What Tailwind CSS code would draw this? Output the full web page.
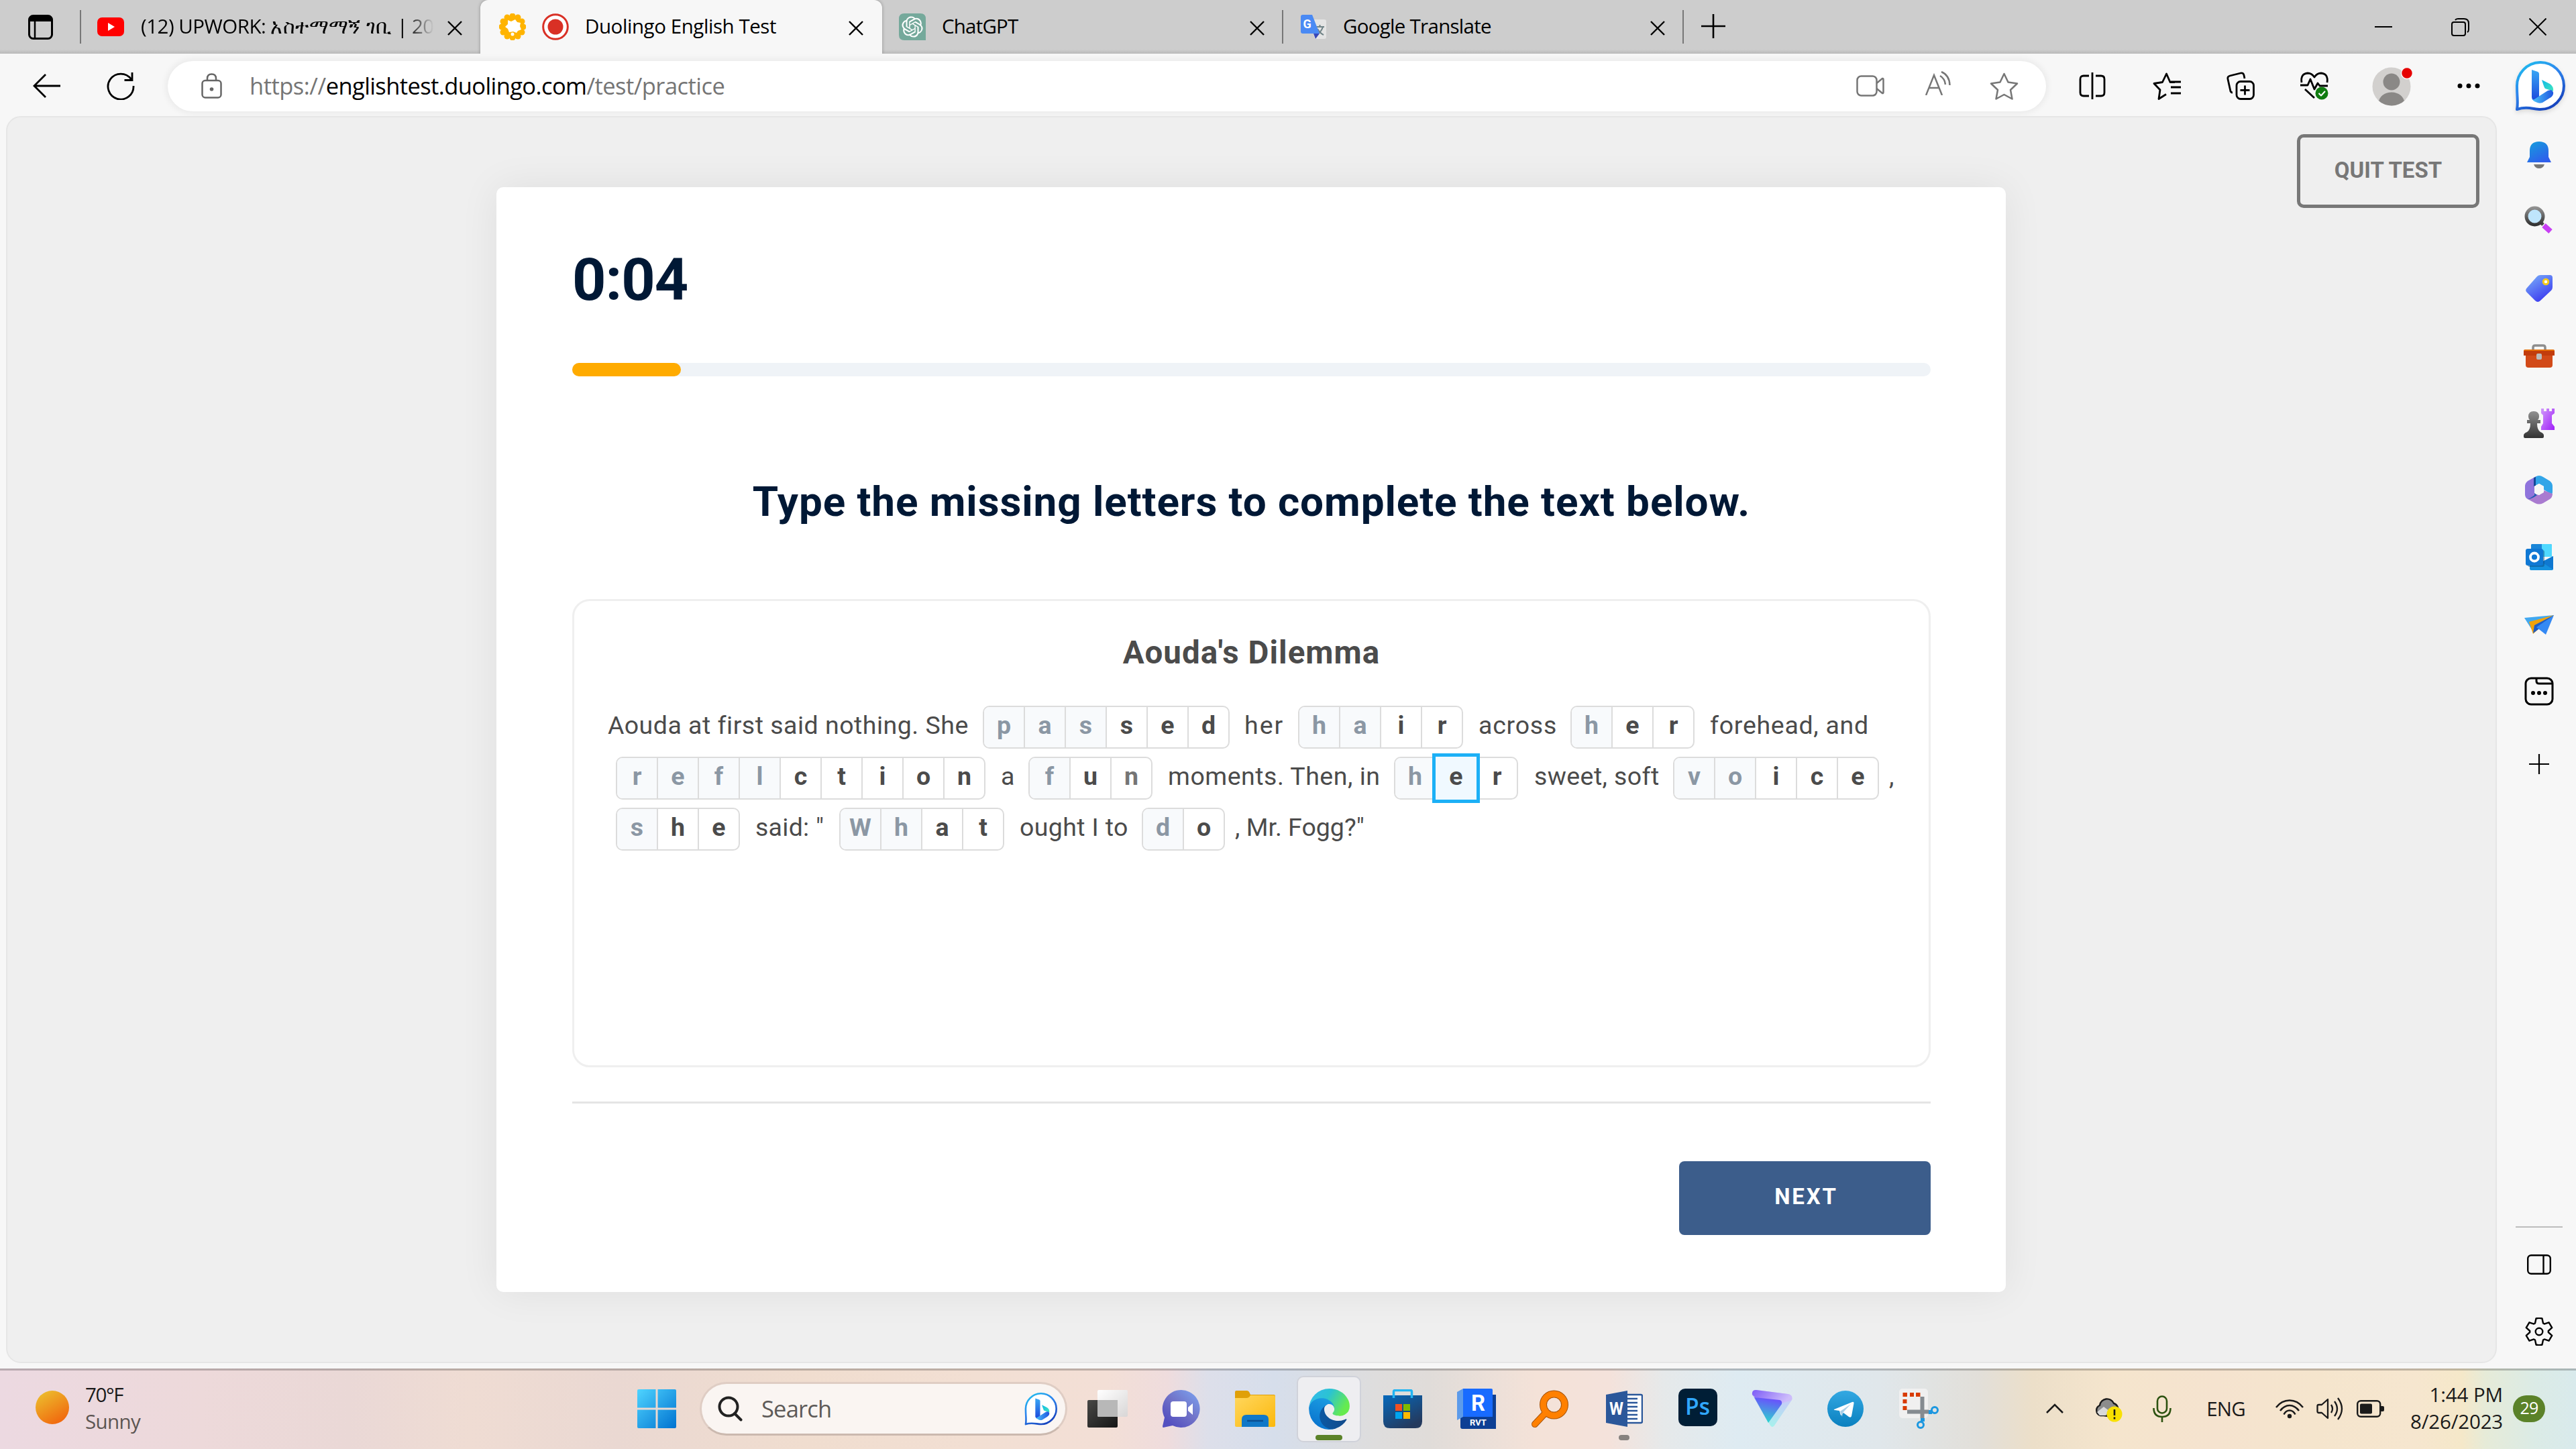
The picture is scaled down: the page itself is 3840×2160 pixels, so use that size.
<!DOCTYPE html>
<html lang="en">
<head>
<meta charset="utf-8">
<title>Duolingo English Test</title>
<script src="https://cdn.jsdelivr.net/npm/@tailwindcss/browser@4"></script>
</head>
<body class="w-[3840px] h-[2160px] overflow-hidden flex flex-col bg-[#f7f7f7] text-black font-['Open_Sans','Noto_Sans',sans-serif]">

<!-- shared symbols and gradients -->
<svg class="absolute w-0 h-0" aria-hidden="true">
  <defs>
    <linearGradient id="gRing" x1="0" y1="0" x2=".6" y2="1"><stop offset="0" stop-color="#1cc4ee"/><stop offset=".5" stop-color="#2f86ee"/><stop offset="1" stop-color="#1746c0"/></linearGradient>
    <linearGradient id="gB1" x1="0" y1="0" x2="0" y2="1"><stop offset="0" stop-color="#3aa8f5"/><stop offset="1" stop-color="#1b48dc"/></linearGradient>
    <linearGradient id="gB2" x1="0" y1="0" x2="1" y2="1"><stop offset="0" stop-color="#10b8e8"/><stop offset="1" stop-color="#3fe6c0"/></linearGradient>
    <linearGradient id="gB3" x1="0" y1="0" x2="1" y2="0"><stop offset="0" stop-color="#4cc6fa"/><stop offset="1" stop-color="#1f55e0"/></linearGradient>
    <linearGradient id="gBlue" x1="0" y1="0" x2=".6" y2="1"><stop offset="0" stop-color="#14a0dc"/><stop offset="1" stop-color="#2f5fec"/></linearGradient>
    <linearGradient id="gGrey" x1="0" y1="0" x2="0" y2="1"><stop offset="0" stop-color="#909090"/><stop offset="1" stop-color="#333"/></linearGradient>
    <linearGradient id="gPurple" x1="0" y1="0" x2="1" y2="1"><stop offset="0" stop-color="#d09afa"/><stop offset="1" stop-color="#a020f8"/></linearGradient>
    <linearGradient id="gSun" x1=".1" y1="0" x2=".7" y2="1"><stop offset="0" stop-color="#ecc22f"/><stop offset="1" stop-color="#f1660d"/></linearGradient>
    <linearGradient id="gWin" gradientUnits="userSpaceOnUse" x1="0" y1="0" x2="58" y2="58"><stop offset="0" stop-color="#4fd4ff"/><stop offset="1" stop-color="#0072d0"/></linearGradient>
    <symbol id="bing" viewBox="0 0 75 75">
      <path d="M3 72C5 62 3 54 3 38A35 35 0 1 1 38 72C28 72 18 67 3 72Z" fill="#fff" stroke="url(#gRing)" stroke-width="4" stroke-linejoin="round"/>
      <path d="M25 13l9 3q2 1 2 3v34l-8 6q-3-2-3-5z" fill="url(#gB1)"/>
      <path d="M40 28l12 6q6 4 5 11l-12-4q-1 0-5-13z" fill="url(#gB2)"/>
      <path d="M25 55q1 3 4 2l20-13 5-1q4 3 3 6-1 4-5 6l-11 7q-5 2-10-1-5-2-6-6z" fill="url(#gB3)"/>
    </symbol>
    <symbol id="x" viewBox="0 0 22 22"><path d="M1 1L21 21M21 1L1 21" stroke="#000" stroke-width="2.4" fill="none"/></symbol>
  </defs>
</svg>

<!-- tab strip -->
<header class="h-20 shrink-0 flex items-center bg-[#cdcdcd] bg-linear-to-t from-[#b9b9b9] to-[#cdcdcd] to-[6px] text-[29.5px]">
  <div class="w-[119px] pl-[42px]">
    <svg class="w-[37px] h-[37px]" viewBox="0 0 37 37"><rect x="1.5" y="1.5" width="34" height="34" rx="6" fill="none" stroke="#000" stroke-width="3"/><path d="M1.5 10V7q0-5.500 5.500-5.500h23q5.500 0 5.500 5.500v3z" fill="#000"/><path d="M10 10v25" stroke="#000" stroke-width="2.500"/></svg>
  </div>
  <div class="w-[2px] h-[50px] bg-[#777]"></div>

  <div class="w-[595px] h-full flex items-center pl-[24px] pr-[27px]">
    <svg class="w-[40px] h-[28px]" viewBox="0 0 40 28"><rect width="40" height="28" rx="7" fill="#f00"/><path d="M16 8l10 6-10 6z" fill="#fff"/></svg>
    <div class="ml-[25px] w-[450px] whitespace-nowrap -mt-[2px] mask-r-from-88% mask-r-to-97%"><span class="tracking-[-0.5px]">(12) UPWORK: </span><span class="tracking-[0.4px]">አስተማማኝ ገቢ</span><span class="tracking-[-0.7px]"> | 202</span></div>
    <svg class="w-[22px] h-[22px] ml-auto mt-1"><use href="#x"/></svg>
  </div>

  <div class="relative w-[599px] h-full flex items-center pl-[28px] pr-[28px] bg-[#f7f7f7] rounded-t-[12px] shadow-[0_0_5px_rgba(0,0,0,0.3)] [clip-path:inset(0_-6px_0_-6px)]">
    <svg class="w-[40px] h-[40px]" viewBox="-20 -20 40 40">
      <g fill="#ffb400"><circle r="17"/><circle cy="-16" r="4.500"/><circle cy="16" r="4.500"/><circle cx="16" r="4.500"/><circle cx="-16" r="4.500"/><circle cx="8" cy="-14" r="4.500"/><circle cx="14" cy="-8" r="4.500"/><circle cx="-8" cy="-14" r="4.500"/><circle cx="-14" cy="-8" r="4.500"/><circle cx="8" cy="14" r="4.500"/><circle cx="14" cy="8" r="4.500"/><circle cx="-8" cy="14" r="4.500"/><circle cx="-14" cy="8" r="4.500"/></g>
      <path d="M-7-10l5 2 6-3 3 4 5 1-1 5 2 5-5 2-2 3-5-2-6 1-2-5-4-3 4-4z" fill="#fff"/><circle cy="11" r="2.500" fill="#fff"/>
    </svg>
    <svg class="w-[40px] h-[40px] ml-[24px]" viewBox="0 0 40 40"><circle cx="20" cy="20" r="18.300" fill="#fff" stroke="#d93025" stroke-width="3"/><circle cx="20" cy="20" r="11.500" fill="#d93025"/></svg>
    <div class="ml-[24px] -mt-[2px] whitespace-nowrap tracking-[-0.44px]">Duolingo English Test</div>
    <svg class="w-[22px] h-[22px] ml-auto mt-1"><use href="#x"/></svg>
  </div>

  <div class="w-[596px] h-full flex items-center pl-[25px] pr-[26px]">
    <svg class="w-[40px] h-[40px]" viewBox="0 0 40 40"><path d="M8 0h24q8 0 8 8v32H8q-8 0-8-8V8q0-8 8-8z" fill="#75a99b"/><path transform="translate(4.400 4.400) scale(1.3)" fill="#fff" d="M22.2819 9.8211a5.9847 5.9847 0 0 0-.5157-4.9108 6.0462 6.0462 0 0 0-6.5098-2.9A6.0651 6.0651 0 0 0 4.9807 4.1818a5.9847 5.9847 0 0 0-3.9977 2.9 6.0462 6.0462 0 0 0 .7427 7.0966 5.98 5.98 0 0 0 .511 4.9107 6.051 6.051 0 0 0 6.5146 2.9001A5.9847 5.9847 0 0 0 13.2599 24a6.0557 6.0557 0 0 0 5.7718-4.2058 5.9894 5.9894 0 0 0 3.9977-2.9001 6.0557 6.0557 0 0 0-.7475-7.0729zm-9.022 12.6081a4.4755 4.4755 0 0 1-2.8764-1.0408l.1419-.0804 4.7783-2.7582a.7948.7948 0 0 0 .3927-.6813v-6.7369l2.02 1.1686a.071.071 0 0 1 .038.052v5.5826a4.504 4.504 0 0 1-4.4945 4.4944zm-9.6607-4.1254a4.4708 4.4708 0 0 1-.5346-3.0137l.142.0852 4.783 2.7582a.7712.7712 0 0 0 .7806 0l5.8428-3.3685v2.3324a.0804.0804 0 0 1-.0332.0615L9.74 19.9502a4.4992 4.4992 0 0 1-6.1408-1.6464zM2.3408 7.8956a4.485 4.485 0 0 1 2.3655-1.9728V11.6a.7664.7664 0 0 0 .3879.6765l5.8144 3.3543-2.0201 1.1685a.0757.0757 0 0 1-.071 0l-4.8303-2.7865A4.504 4.504 0 0 1 2.3408 7.872zm16.5963 3.8558L13.1038 8.364 15.1192 7.2a.0757.0757 0 0 1 .071 0l4.8303 2.7913a4.4944 4.4944 0 0 1-.6765 8.1042v-5.6772a.79.79 0 0 0-.407-.667zm2.0107-3.0231l-.142-.0852-4.7735-2.7818a.7759.7759 0 0 0-.7854 0L9.409 9.2297V6.8974a.0662.0662 0 0 1 .0284-.0615l4.8303-2.7866a4.4992 4.4992 0 0 1 6.6802 4.66zM8.3065 12.863l-2.02-1.1638a.0804.0804 0 0 1-.038-.0567V6.0742a4.4992 4.4992 0 0 1 7.3757-3.4537l-.142.0805L8.704 5.459a.7948.7948 0 0 0-.3927.6813zm1.0976-2.3654l2.602-1.4998 2.6069 1.4998v2.9994l-2.5974 1.4997-2.6067-1.4997Z"/></svg>
    <div class="ml-[24px] -mt-[2px] tracking-[-0.8px]">ChatGPT</div>
    <svg class="w-[22px] h-[22px] ml-auto mt-1"><use href="#x"/></svg>
  </div>
  <div class="w-[2px] h-[50px] bg-[#777]"></div>
  <div class="w-[595px] h-full flex items-center pl-[26px] pr-[26px]">
    <svg class="w-[38px] h-[38px]" viewBox="0 0 38 38"><path d="M12 8h23q3 0 3 3v23q0 3-3 3H21z" fill="#e4e4e4"/><path d="M22 19h13M28.500 16v3M33 19q-2 7-9 12M25 22q3 6 9 9" stroke="#6f8286" stroke-width="2" fill="none"/><path d="M19 29h9l-6 8z" fill="#3848b8"/><path d="M3 1h14l11 28H3q-3 0-3-3V4q0-3 3-3z" fill="#4a8af4"/><text x="3.500" y="21" font-size="18" font-weight="700" fill="#fff" font-family="Roboto">G</text></svg>
    <div class="ml-[25px] -mt-[2px] tracking-[-0.72px]">Google Translate</div>
    <svg class="w-[22px] h-[22px] ml-auto mt-1"><use href="#x"/></svg>
  </div>
  <div class="w-[2px] h-[50px] bg-[#777]"></div>
  <svg class="w-[36px] h-[36px] ml-[26px] -mt-[2px]" viewBox="0 0 36 36"><path d="M18 0v36M0 18h36" stroke="#000" stroke-width="2.600"/></svg>
  <div class="ml-auto flex h-full">
    <div class="w-[115px] grid place-items-center"><div class="w-[26px] h-[2px] bg-black"></div></div>
    <div class="w-[115px] grid place-items-center"><svg class="w-[27px] h-[27px]" viewBox="0 0 27 27" fill="none" stroke="#000" stroke-width="2"><rect x="1" y="6" width="20" height="20" rx="3"/><path d="M6 3q1-2 4-2h9q7 0 7 7v9q0 3-2 4"/></svg></div>
    <div class="w-[115px] grid place-items-center"><svg class="w-[26px] h-[26px]" viewBox="0 0 26 26"><path d="M.5.5l25 25M25.500.5l-25 25" stroke="#000" stroke-width="2"/></svg></div>
  </div>
</header>

<!-- toolbar -->
<div class="h-[93px] shrink-0 flex items-center pt-[3px] pl-[15px]">
  <div class="w-[110px] grid place-items-center"><svg class="w-[42px] h-[36px]" viewBox="0 0 42 36" fill="none" stroke="#000" stroke-width="2.800"><path d="M19 1L2 18l17 17M2 18h39"/></svg></div>
  <div class="w-[110px] grid place-items-center"><svg class="w-[42px] h-[42px]" viewBox="0 0 42 42" fill="none" stroke="#000" stroke-width="2.800"><path d="M40 21A19 19 0 1 1 36.500 11M38 1v11.500H26.500"/></svg></div>
  <div class="ml-[15px] w-[2800px] h-[75px] rounded-full bg-white shadow-[0_0_10px_3px_rgba(0,0,0,0.055)] flex items-center pl-[50px] pr-[41px]">
    <svg class="w-[31px] h-[38px]" viewBox="0 0 31 38" fill="none" stroke="#666" stroke-width="2.500"><rect x="1.500" y="11" width="28" height="25.500" rx="4.500"/><path d="M9 11V8q0-6.500 6.500-6.500T22 8v3"/><circle cx="15.500" cy="24" r="2.800" fill="#666" stroke="none"/></svg>
    <div class="ml-[41px] -mt-[1px] text-[34.5px] text-[#757575] whitespace-nowrap"><span class="tracking-[-0.5px]">https://</span><span class="text-black tracking-[-0.6px]">englishtest.duolingo.com</span><span class="tracking-[-0.55px]">/test/practice</span></div>
    <svg class="ml-auto w-[42px] h-[32px]" viewBox="0 0 42 32" fill="none" stroke="#767676" stroke-width="2.500" stroke-linejoin="round"><rect x="1.500" y="1.500" width="29" height="29" rx="6"/><path d="M30.500 12l8.500-7q1.500-.5 1.500 1.500v19q0 2-1.500 1.500l-8.500-7"/></svg>
    <svg class="ml-[61px] w-[38px] h-[36px] -mt-2" viewBox="0 0 38 36" fill="none" stroke="#767676" stroke-width="2.500"><path d="M1 36L13 6l12 30M5 25h16M22 7q7 4 8 13M24 1q12 5 12.500 20"/></svg>
    <svg class="ml-[58px] w-[43px] h-[41px]" viewBox="0 0 43 41" fill="none" stroke="#767676" stroke-width="2.500" stroke-linejoin="round"><path d="M21.500 2l6 12.500 13.500 2-10 9.500 2.500 13.500-12-6.500-12 6.500L12 26 2 16.500l13.500-2z"/></svg>
  </div>
  <div class="ml-[14px] w-[110px] grid place-items-center"><svg class="w-[40px] h-[40px]" viewBox="0 0 40 40" fill="none" stroke="#000" stroke-width="2.800"><path d="M15 5H7q-5 0-5 5v20q0 5 5 5h8M25 5h8q5 0 5 5v20q0 5-5 5h-8M20 0v40"/></svg></div>
  <div class="w-[111px] grid place-items-center"><svg class="w-[42px] h-[41px]" viewBox="0 0 42 41" fill="none" stroke="#000" stroke-width="2.800" stroke-linejoin="round"><path d="M33 14.500l-7 0L20.500 2 14.500 14.500 2 16.500l9 9.500-2 13.500 11-7v0M27 22h15M27 14h15M27 31h15"/></svg></div>
  <div class="w-[110px] grid place-items-center"><svg class="w-[42px] h-[42px]" viewBox="0 0 42 42" fill="none" stroke="#000" stroke-width="2.800" stroke-linejoin="round"><rect x="15" y="14.500" width="25.500" height="26" rx="6"/><path d="M27.500 20.500v14M20.500 27.500h14M27 10l-1-5q-1-4-5-3L5 6Q1 7 2 11l4 18q1 2 3 2"/></svg></div>
  <div class="w-[110px] grid place-items-center"><svg class="w-[44px] h-[42px]" viewBox="0 0 44 42" fill="none" stroke="#000" stroke-width="2.800" stroke-linejoin="round"><path d="M3 16Q1 3 12 2q6 0 10 6Q26 2 32 2q11 1 9 14M1 20h11l4-9 6 15 5-9 3 4h12M8 26l14 13"/><circle cx="33" cy="32" r="9.500" fill="#107c10" stroke="none"/><path d="M28.500 32l3.500 3.500 6-6.500" stroke="#fff" stroke-width="2"/></svg></div>
  <div class="w-[120px] pl-[2px] grid place-items-center"><svg class="w-[62px] h-[62px]" viewBox="0 0 62 62"><clipPath id="av"><circle cx="30" cy="32" r="28.500"/></clipPath><circle cx="30" cy="32" r="28.500" fill="#d2d0ce"/><g clip-path="url(#av)" fill="#8a8886"><circle cx="30" cy="25" r="12.500"/><ellipse cx="30" cy="56" rx="20" ry="16.500" stroke="#d2d0ce" stroke-width="2"/></g><circle cx="53" cy="12" r="8.500" fill="#e60000" stroke="#f7f7f7" stroke-width="1.500"/></svg></div>
  <div class="w-[110px] grid place-items-center"><svg class="w-[34px] h-[8px]" viewBox="0 0 34 8"><circle cx="4" cy="4" r="3.500"/><circle cx="17" cy="4" r="3.500"/><circle cx="30" cy="4" r="3.500"/></svg></div>
  <div class="w-[102px] grid place-items-center"><svg class="w-[75px] h-[75px] drop-shadow-md"><use href="#bing"/></svg></div>
</div>

<!-- page and sidebar -->
<div class="h-[1867px] shrink-0 flex items-start">
  <main class="ml-[9px] w-[3713px] h-[1859px] border-2 border-[#e6e6e6] rounded-[22px] bg-[#efefef] flex items-start font-['Roboto',sans-serif]">
    <section class="ml-[729px] mt-[104px] w-[2250px] h-[1647px] shrink-0 bg-white rounded-[10px] shadow-[0_0_60px_rgba(0,0,0,0.07)] pl-[113px] pr-[112px] flex flex-col">
      <div class="mt-[98px] h-20 leading-[80px] text-[88px] font-bold text-[#001835] tracking-[-1px]">0:04</div>
      <div class="mt-[84px] h-[20px] rounded-full bg-[#eff3f7]"><div class="h-full w-[162px] rounded-full bg-[#ffab00]"></div></div>
      <h1 class="mt-[147px] h-20 leading-[80px] text-center whitespace-nowrap text-[62px] font-bold text-[#001835] tracking-[0.92px]">Type the missing letters to complete the text below.</h1>

      <div class="mt-[105px] h-[698px] border-[3px] border-[#efefef] rounded-[26px] text-[#4b4b4b]">
        <h2 class="mt-[47px] h-[60px] leading-[60px] text-center text-[47.5px] font-bold tracking-[1.06px]">Aouda's Dilemma</h2>
        <div class="mt-[49px] pl-[50px] flex flex-col gap-3 text-[37.5px] leading-[58px] whitespace-nowrap">
          <div class="flex h-16">
            <span class="w-[559px] tracking-[0.49px]">Aouda at first said nothing. She</span>
            <span data-word="passed" data-given="3"></span>
            <span class="w-[102px] pl-[22px] tracking-[2px]">her</span>
            <span data-word="hair" data-given="2"></span>
            <span class="w-[160px] pl-[23px] tracking-[0.78px]">across</span>
            <span data-word="her" data-given="1"></span>
            <span class="pl-[23px] tracking-[0.7px]">forehead, and</span>
          </div>
          <div class="flex h-16 pl-3">
            <span data-word="reflction" data-given="4"></span>
            <span class="w-[64px] pl-[23px]">a</span>
            <span data-word="fun" data-given="1" data-dim="2"></span>
            <span class="w-[360px] pl-[23px] tracking-[0.5px]">moments. Then, in</span>
            <span data-word="her" data-given="1" data-focus="1"></span>
            <span class="w-[231px] pl-[24px] tracking-[0.4px]">sweet, soft</span>
            <span data-word="voice" data-given="2"></span>
            <span class="pl-[15px]">,</span>
          </div>
          <div class="flex h-16 pl-3">
            <span data-word="she" data-given="1"></span>
            <span class="w-[148px] pl-[23px] tracking-[0.27px]">said: "</span>
            <span data-word="What" data-given="2"></span>
            <span class="w-[205px] pl-[23px] tracking-[0.36px]">ought I to</span>
            <span data-word="do" data-given="1"></span>
            <span class="pl-[15px]">, Mr. Fogg?"</span>
          </div>
        </div>
      </div>

      <div class="mt-[51px] h-[3px] bg-[#e5e5e5]"></div>
      <button class="mt-[86px] self-end w-[375px] h-[110px] rounded-[8px] bg-[#3c5d8b] text-white text-[33px] leading-[106px] pb-1 pl-1 font-bold tracking-[2.8px]">NEXT</button>
    </section>
    <button class="ml-[434px] mt-[25px] w-[272px] h-[110px] border-[5px] border-[#777] rounded-[10px] text-[#777] text-[33px] leading-[97px] pb-[3px] font-bold">QUIT TEST</button>
  </main>

  <!-- sidebar -->
  <aside class="w-[118px] pl-[8px] h-full flex flex-col items-center pt-[8px]">
    <div class="h-[100px] grid place-items-center"><svg class="w-[38px] h-[42px]" viewBox="0 0 38 42"><path d="M11 35h16q-2 6-8 6t-8-6z" fill="#777"/><path d="M1 32l4-8v-9Q5 1 19 1t14 14v9l4 8z" fill="url(#gBlue)"/></svg></div>
    <div class="h-[100px] mr-[3px] grid place-items-center"><svg class="w-[42px] h-[42px] mt-[-6px]" viewBox="0 0 42 42"><path d="M29 29l10 9" stroke="#c840f4" stroke-width="8"/><path d="M24 24l4 4" stroke="#444" stroke-width="5"/><circle cx="15.500" cy="15.500" r="12.500" fill="#bfe5fc" stroke="url(#gGrey)" stroke-width="5"/></svg></div>
    <div class="h-[100px] grid place-items-center"><svg class="w-[42px] h-[42px] mt-[-2px]" viewBox="0 0 42 42"><linearGradient id="tg" x1="0" y1="0" x2=".6" y2="1"><stop offset="0" stop-color="#7db5fa"/><stop offset="1" stop-color="#3c3cf0"/></linearGradient><path d="M23 1h14q4 0 4 4v14q0 3-2 5L23 39q-4 4-8 0L2 26q-2-3 1-6L18 3q2-2 5-2z" fill="url(#tg)"/><circle cx="31" cy="11" r="3.800" fill="#fff" stroke="#f4c91c" stroke-width="3"/></svg></div>
    <div class="h-[100px] grid place-items-center"><svg class="w-[46px] h-[36px]" viewBox="0 0 46 36"><path d="M14 9V5q0-3 3-3h12q3 0 3 3v4" fill="none" stroke="#8d8d8d" stroke-width="3.500"/><path d="M3 17h40v14q0 4-4 4H7q-4 0-4-4z" fill="#d24a18"/><path d="M0 11q0-3 3-3h40q3 0 3 3v6H0z" fill="#c23c0c"/><path d="M0 10q0-2 3-2h40q3 0 3 2z" fill="#e8710a"/><rect x="19" y="14" width="8" height="9" rx="2" fill="#bbb"/></svg></div>
    <div class="h-[100px] grid place-items-center"><svg class="w-[46px] h-[46px]" viewBox="0 0 46 46"><path d="M26 1h4v4h4V1h4v4h4V1h4v7l-4 3v12l4 5v5H26v-5l3-5V11l-3-3z" fill="url(#gPurple)"/><path d="M15 5q8 0 8 8 0 3-2 5h4v5h-5q0 10 5 13 5 2 5 5v2q0 2-2 2H2q-2 0-2-2v-2q0-3 5-5 5-3 5-13H5v-5h4q-2-2-2-5 0-8 8-8z" fill="url(#gGrey)"/></svg></div>
    <div class="h-[100px] grid place-items-center"><svg class="w-[42px] h-[44px] mt-[-2px]" viewBox="0 0 42 44"><path d="M15 3q6-4 12 0l10 6q4 3 4 8v9q0 3-3 2l-10-6v-5l-7-4-8 4z" fill="#32a5e8"/><path d="M15 3L4 9q-4 3-4 8v12q0 5 4 7l5 1 5-3V8q0-4 3-6z" fill="#8f74dc"/><path d="M13 4l3-1v13l-3 1z" fill="#164a98"/><path d="M4 36l11 6q6 3 12 0l10-6q4-3 4-8l-13-5-7 7-8-2-1 4q-4 3-8 4z" fill="#a97bd0"/><path d="M4 36q6 0 14-6l-4-3v3q-6 5-10 6z" fill="#245ab4"/><path d="M21 13l7 4v9l-7 4-7-4v-9z" fill="#f7f7f7"/></svg></div>
    <div class="h-[100px] grid place-items-center"><svg class="w-[41px] h-[41px] mt-[-2px]" viewBox="0 0 41 41"><path d="M9 1h28q2 0 2 2v17H8V2z" fill="#1a86d8"/><path d="M24 1h13q2 0 2 2v17H24z" fill="#50d9ff"/><path d="M6 20l17 8 18-9v19q0 2-2 2H8q-2 0-2-2z" fill="#1490df"/><path d="M24 28l17-9v20z" fill="#0f78d0"/><rect x="3" y="10" width="25" height="25" rx="3" fill="#0a4a80" opacity=".5"/><rect x="0" y="8" width="26" height="25" rx="3" fill="#0f78d4"/><circle cx="13" cy="20.500" r="6" fill="none" stroke="#fff" stroke-width="3.800"/></svg></div>
    <div class="h-[100px] grid place-items-center"><svg class="w-[44px] h-[31px]" viewBox="0 0 44 31"><path d="M0 5L44 1 14 27z" fill="#41a8f0"/><path d="M7 11L44 1 13 29z" fill="#f0a20c"/><path d="M13 28l2-12L44 1 21 22z" fill="#1b5cc8"/><path d="M18 19L44 1 32 30z" fill="#3489f4"/></svg></div>
    <div class="h-[100px] grid place-items-center"><svg class="w-[44px] h-[43px] mt-[-2px]" viewBox="0 0 44 43" fill="none" stroke="#000" stroke-width="3"><rect x="2" y="2" width="40" height="39" rx="8"/><path d="M18 2v4q0 4 4 4h20"/><g fill="#000" stroke="none"><circle cx="13" cy="24" r="3"/><circle cx="22" cy="24" r="3"/><circle cx="31" cy="24" r="3"/></g></svg></div>
    <div class="h-[100px] mt-[8px] grid place-items-center"><svg class="w-[30px] h-[30px]" viewBox="0 0 30 30"><path d="M15 0v30M0 15h30" stroke="#000" stroke-width="2.200"/></svg></div>
    <div class="mt-auto w-[70px] h-[2px] bg-[#bdbdbd]"></div>
    <div class="mt-[5px] h-[100px] grid place-items-center"><svg class="w-[36px] h-[30px]" viewBox="0 0 36 30" fill="none" stroke="#000" stroke-width="2.400"><rect x="1.200" y="1.200" width="33.600" height="27.600" rx="5"/><path d="M24.500 1v28"/></svg></div>
    <div class="h-[100px] mb-[5px] grid place-items-center"><svg class="w-[42px] h-[42px]" viewBox="-21 -21 42 42" fill="none" stroke="#000" stroke-width="2.400" stroke-linejoin="round"><path d="M-4.500-19.500Q0-21 4.500-19.500L6-12.500 7.800-11.400 14.600-13.700 19.200-5.800 13.800-1V1L19.200 5.800 14.600 13.700 7.800 11.400 6 12.500 4.500 19.500Q0 21-4.500 19.500L-6 12.500-7.800 11.400-14.600 13.700-19.200 5.800-13.800 1V-1L-19.200-5.800-14.600-13.700-7.800-11.400-6-12.500z"/><circle r="5.300"/></svg></div>
  </aside>
</div>

<!-- taskbar -->
<footer class="h-[120px] shrink-0 border-t-[3px] border-black/22 bg-origin-border flex items-center pb-[3px] text-[29.5px] text-[#1a1a1a] bg-[linear-gradient(90deg,#ecd9e1_0px,#edd9da_300px,#ead8d6_520px,#efdcd3_700px,#ead8d2_920px,#f0ddcf_1200px,#f2dfd3_1450px,#f3dfd6_1650px,#efdcdd_1740px,#dddfea_1800px,#d6deeb_1900px,#dedddd_2050px,#e0dcd9_2130px,#f4e2d8_2290px,#f4e2db_2400px,#e6e9ea_2480px,#deebf2_2590px,#e0e7eb_2800px,#e2dfd9_2950px,#ecdfc9_3030px,#f5e5cd_3150px,#f5e3cf_3300px,#f5e5cd_3450px,#f6e6cf_3600px,#f5e8c9_3670px,#e6ebd8_3705px,#dbebe6_3780px,#d9eaec_3840px)]">
  <svg class="ml-[53px] w-[50px] h-[50px] -mt-1" viewBox="0 0 50 50"><circle cx="25" cy="25" r="25" fill="url(#gSun)"/></svg>
  <div class="ml-[24px] w-[823px] leading-[40px] -mt-[2px]"><div class="tracking-[-1.4px]">70°F</div><div class="text-[#5c5552] tracking-[-0.6px]">Sunny</div></div>
  <svg class="w-[58px] h-[58px]" viewBox="0 0 58 58" fill="url(#gWin)"><path d="M2 0h25.500v27.500H0V2q0-2 2-2zM30.500 0H56q2 0 2 2v25.500H30.500zM0 30.500h27.500V58H2q-2 0-2-2zM30.500 30.500H58V56q0 2-2 2H30.500z"/></svg>
  <div class="ml-[35px] w-[548px] h-[80px] rounded-full border-[3px] border-[#dfcdc4] border-b-[#cbb9af] bg-[#faf5f2] flex items-center pl-[24px] pr-[12px]">
    <svg class="w-[37px] h-[38px]" viewBox="0 0 37 38" fill="none" stroke="#222" stroke-width="4"><circle cx="16" cy="16" r="13.500"/><path d="M25 26l9.500 9.500" stroke-linecap="round"/></svg>
    <span class="ml-[28px] text-[34.500px] text-[#5d5a58] tracking-[-0.8px]">Search</span>
    <svg class="ml-auto w-[49px] h-[49px]"><use href="#bing"/></svg>
  </div>
  <div class="ml-[5px] flex items-center h-full">
    <div class="w-[110px] grid place-items-center"><svg class="w-[60px] h-[56px]" viewBox="0 0 60 56"><linearGradient id="tv1" x1="0" y1="0" x2="1" y2="1"><stop offset="0" stop-color="#484846"/><stop offset="1" stop-color="#151515"/></linearGradient><linearGradient id="tv2" x1="0" y1="0" x2="1" y2="1"><stop offset="0" stop-color="#fff"/><stop offset="1" stop-color="#d8d6d6"/></linearGradient><rect y="15" width="45" height="41" rx="2" fill="url(#tv1)"/><rect x="15" y="0" width="45" height="40" rx="2" fill="url(#tv2)"/><path d="M15 15h30v25H17q-2 0-2-2z" fill="#b8b8b8"/></svg></div>
    <div class="w-[110px] grid place-items-center"><svg class="w-[58px] h-[58px]" viewBox="0 0 58 58"><linearGradient id="ch" x1=".9" y1=".1" x2=".2" y2=".9"><stop offset="0" stop-color="#7a9bea"/><stop offset=".5" stop-color="#7173c8"/><stop offset="1" stop-color="#5450c0"/></linearGradient><path d="M29 1a28 28 0 1 1-13 53L2 57q-1 0-1-2l3-13A28 28 0 0 1 29 1z" fill="url(#ch)"/><rect x="13" y="18" width="24" height="23" rx="4" fill="#fff"/><path d="M39 27l7-6v17l-7-6z" fill="#fff"/></svg></div>
    <div class="w-[110px] grid place-items-center"><svg class="w-[60px] h-[54px]" viewBox="0 0 60 54"><linearGradient id="fo" x1="0" y1="0" x2="1" y2="1"><stop offset="0" stop-color="#ffd75e"/><stop offset="1" stop-color="#fbb80d"/></linearGradient><path d="M2 0h16q3 0 5 6h35q2 0 2 2v12H0V2q0-2 2-2z" fill="#e0a008"/><path d="M0 11h17q4 0 6-4h35q2 0 2 2v43q0 2-2 2H2q-2 0-2-2z" fill="url(#fo)"/><path d="M10 54V43q0-7 7-7h26q7 0 7 7v11z" fill="#0f78c8"/><path d="M18 45h24" stroke="#0a4f92" stroke-width="2.500"/></svg></div>
    <div class="w-[110px] h-full grid place-items-center relative">
      <div class="w-[96px] h-[99px] rounded-[10px] bg-[#eeeef1] border-2 border-[#d0d2da] grid place-items-center"><svg class="w-[61px] h-[61px]" viewBox="4 4 257 257"><linearGradient id="e1" x1="0" y1="0" x2="1" y2="0"><stop offset="0" stop-color="#0c59a4"/><stop offset="1" stop-color="#114a8b"/></linearGradient><linearGradient id="e2" x1=".6" y1="0" x2=".3" y2="1"><stop offset="0" stop-color="#1b9de2"/><stop offset="1" stop-color="#0870cc"/></linearGradient><linearGradient id="e3" x1="0" y1="0" x2="1" y2=".4"><stop offset="0" stop-color="#35b8f1"/><stop offset=".5" stop-color="#2bc3d2"/><stop offset="1" stop-color="#66eb4e"/></linearGradient>
      <path fill="url(#e1)" d="M235.68 195.46a93.73 93.73 0 0 1-10.54 4.71 101.87 101.87 0 0 1-35.9 6.46c-47.32 0-88.54-32.55-88.54-74.32A31.48 31.48 0 0 1 117.13 105c-42.8 1.8-53.8 46.4-53.8 72.53 0 73.88 68.09 81.37 82.76 81.37 7.91 0 19.84-2.3 27-4.56l1.31-.44a128.34 128.34 0 0 0 66.6-52.8 4 4 0 0 0-5.32-5.64Z"/><path fill="url(#e2)" d="M110.34 246.34A79.2 79.2 0 0 1 87.6 225a80.72 80.72 0 0 1 29.53-120c3.12-1.47 8.45-4.13 15.54-4a32.35 32.35 0 0 1 25.69 13 31.88 31.88 0 0 1 6.36 18.66c0-.21 24.46-79.6-80-79.6-43.9 0-80 41.66-80 78.21a130.15 130.15 0 0 0 12.11 56 128 128 0 0 0 156.38 67.11 75.55 75.55 0 0 1-62.78-8Z"/><path fill="url(#e3)" d="M156.94 153.78c-.81 1.05-3.3 2.5-3.3 5.66 0 2.61 1.7 5.12 4.72 7.23 14.38 10 41.49 8.68 41.56 8.68a59.56 59.56 0 0 0 30.27-8.35 61.38 61.38 0 0 0 30.43-52.88c.26-22.41-8-37.31-11.34-43.91C228.09 28.76 182.35 4.35 132.61 4.35a128 128 0 0 0-128 126.2c.48-36.54 36.8-66.05 80-66.05 3.5 0 23.46.34 42 10.07 16.34 8.58 24.9 18.94 30.85 29.21 6.18 10.67 7.28 24.15 7.28 29.52 0 5.37-2.74 13.33-7.8 20.48Z"/></svg></div>
      <div class="absolute left-[35px] bottom-[10px] w-[40px] h-[8px] rounded-full bg-[#5b8229]"></div>
    </div>
    <div class="w-[110px] grid place-items-center"><svg class="w-[58px] h-[58px]" viewBox="0 0 58 58"><linearGradient id="st" x1="0" y1="0" x2=".6" y2="1"><stop offset="0" stop-color="#0669bc"/><stop offset="1" stop-color="#243a5e"/></linearGradient><path d="M0 9h58v39q0 10-10 10H10Q0 58 0 48z" fill="url(#st)"/><path d="M15.500 13V3.500q0-2 2-2h23q2 0 2 2V13" fill="none" stroke="#22b4f2" stroke-width="3.500"/><path d="M18 22h10v10H18z" fill="#f25022"/><path d="M30 22h10v10H30z" fill="#7fba00"/><path d="M18 34h10v10H18z" fill="#00a4ef"/><path d="M30 34h10v10H30z" fill="#ffb900"/></svg></div>
    <div class="w-[110px] grid place-items-center"><svg class="w-[58px] h-[60px]" viewBox="0 0 58 60"><path d="M5 42h52v18H8q-3 0-3-3z" fill="#0d3f94"/><path d="M50 9h8v51h-8z" fill="#0d3f94"/><path d="M0 5l9-5v42l-9 5z" fill="#5d9bea"/><path d="M9 0h42q2 0 2 2v40H9z" fill="#186bff"/><text x="21" y="33" font-size="33" font-weight="700" fill="#fff" font-family="Roboto" textLength="21" lengthAdjust="spacingAndGlyphs">R</text><text x="19" y="55" font-size="13" font-weight="700" fill="#fff" font-family="Roboto">RVT</text></svg></div>
    <div class="w-[110px] grid place-items-center"><svg class="w-[56px] h-[56px]" viewBox="0 0 56 56" fill="none"><g stroke="#a85408"><circle cx="33.500" cy="22" r="16" stroke-width="11"/><path d="M5 51L21 34" stroke-width="10" stroke-linecap="round"/></g><g stroke="#ff8000"><circle cx="33.500" cy="22" r="16" stroke-width="9"/><path d="M5 51L22 33" stroke-width="8" stroke-linecap="round"/></g></svg></div>
    <div class="w-[110px] h-full grid place-items-center relative"><svg class="w-[55px] h-[54px]" viewBox="0 0 55 54"><rect x="24" y="6" width="30" height="42" rx="2" fill="#fff" stroke="#2b579a" stroke-width="2.500"/><path d="M30 12h17M30 18h17M30 24h17M30 30h17M30 36h17M30 42h17" stroke="#2b579a" stroke-width="2.500"/><path d="M0 6l32-6v54L0 48z" fill="#2b579a"/><text x="5" y="36" font-size="25" font-weight="700" fill="#fff" font-family="Roboto" textLength="21" lengthAdjust="spacingAndGlyphs">W</text></svg>
      <div class="absolute left-[47px] bottom-[10px] w-[16px] h-[8px] rounded-full bg-[#87827f]"></div></div>
    <div class="w-[110px] grid place-items-center"><svg class="w-[58px] h-[56px] -mt-1" viewBox="0 0 58 56"><rect width="58" height="56" rx="10" fill="#001e36"/><text x="10" y="39" font-size="34" font-weight="600" fill="#31a8ff" font-family="Open Sans" textLength="37" lengthAdjust="spacingAndGlyphs">Ps</text></svg></div>
    <div class="w-[110px] grid place-items-center"><svg class="w-[61px] h-[56px]" viewBox="0 0 61 56"><linearGradient id="pv" x1="0" y1="0" x2="1" y2=".3"><stop offset="0" stop-color="#7d5cf6"/><stop offset="1" stop-color="#cdbcfb"/></linearGradient><linearGradient id="pw" x1=".6" y1="0" x2=".4" y2="1"><stop offset="0" stop-color="#6d4aff"/><stop offset="1" stop-color="#2ad8cc"/></linearGradient><linearGradient id="px" x1=".6" y1="0" x2=".4" y2="1"><stop offset="0" stop-color="#d0c0fc"/><stop offset="1" stop-color="#a5f2ec"/></linearGradient><path d="M1 7Q0 0 7 0l47 6q8 1 6 9L34 53q-3 4-6 0z" fill="url(#px)"/><path d="M1 7Q0 0 7 0l47 6q8 1 6 9l-15 5-40-9z" fill="url(#pv)"/><path d="M4 11l38 4q4 1 3 6L25 49z" fill="url(#pw)"/></svg></div>
    <div class="w-[110px] grid place-items-center"><svg class="w-[54px] h-[54px]" viewBox="0 0 54 54"><linearGradient id="tl" x1="0" y1="0" x2="0" y2="1"><stop offset="0" stop-color="#33a8e2"/><stop offset="1" stop-color="#0a80bf"/></linearGradient><circle cx="27" cy="27" r="27" fill="url(#tl)"/><path d="M10 28l27-11q3-1 2.500 2L36 38q-1 3-4 1l-8-6-4 4-2-7-7-1q-2 0-1-1z" fill="#fff"/><path d="M19 31l16-11-12 13-1 6z" fill="#a9cfe8"/></svg></div>
    <div class="w-[110px] grid place-items-center"><svg class="w-[60px] h-[60px]" viewBox="0 0 60 60"><rect width="43" height="44" rx="5" fill="#f0f0f0"/><path d="M8.500 32v-6M8.500 22v-6M5.500 9h6.500M16 9h6M25 9h6.500" stroke="#d83b01" stroke-width="6"/><path d="M34.500 12v32M12 34.500h32" stroke="#858b90" stroke-width="6"/><circle cx="53" cy="32" r="4.500" fill="none" stroke="#1b97e0" stroke-width="3"/><circle cx="32" cy="54" r="4.500" fill="none" stroke="#1b97e0" stroke-width="3"/><path d="M44 35h5M35 44v5" stroke="#1b97e0" stroke-width="6"/></svg></div>
  </div>
  <div class="ml-[107px] flex items-center">
    <div class="w-[80px] grid place-items-center"><svg class="w-[28px] h-[16px]" viewBox="0 0 28 16"><path d="M2 14L14 2l12 12" fill="none" stroke="#1a1a1a" stroke-width="2.600"/></svg></div>
    <div class="w-[80px] grid place-items-center"><svg class="w-[42px] h-[36px] mt-1" viewBox="0 0 42 36"><path d="M14 26H9a8 8 0 0 1-1-15A11 11 0 0 1 29 8a9 9 0 0 1 6 6L20 27z" fill="#8c8c8c" stroke="#1a1a1a" stroke-width="2.400"/><path d="M4 21l10-8 8 6-5 7H8z" fill="#d9d9d9"/><circle cx="30" cy="24" r="11.500" fill="#f8e000"/><path d="M30 17v9M30 28.500v3" stroke="#1a1a1a" stroke-width="2.600"/></svg></div>
    <div class="w-[80px] grid place-items-center"><svg class="w-[28px] h-[40px]" viewBox="0 0 28 40" fill="none" stroke="#2c5210" stroke-width="2.600"><rect x="7" y="1.500" width="14" height="25" rx="7"/><path d="M1.500 19q0 13 12.500 13t12.500-13M14 32v8"/></svg></div>
    <div class="w-[110px] text-center tracking-[-0.8px]">ENG</div>
    <div class="ml-[10px] w-[60px] grid place-items-center"><svg class="w-[42px] h-[30px]" viewBox="0 0 42 30" fill="none" stroke="#1a1a1a" stroke-width="2.500"><path d="M1 13Q9 2.500 21 2.500T41 13M7 18q6-8 14-8t14 8M12.500 23.500q3-6 8.500-6t8.500 6"/><circle cx="21" cy="26" r="3.200" fill="#1a1a1a" stroke="none"/></svg></div>
    <div class="w-[60px] grid place-items-center"><svg class="w-[41px] h-[34px]" viewBox="0 0 41 34" fill="none" stroke="#1a1a1a" stroke-width="2.300" stroke-linejoin="round"><path d="M1.500 13q0-2 2-2H8l9-8v28l-9-8H3.500q-2 0-2-2zM22 11q4 6 0 12M27 6q8 11 0 22M32 1q12 16 0 32"/></svg></div>
    <div class="w-[60px] grid place-items-center"><svg class="w-[41px] h-[26px]" viewBox="0 0 41 26"><rect x="1.200" y="1.200" width="34" height="23.600" rx="5" fill="none" stroke="#1a1a1a" stroke-width="2.400"/><rect x="5" y="5.500" width="18" height="15" rx="2" fill="#1a1a1a"/><path d="M36 9h3q2 0 2 2v4q0 2-2 2h-3z" fill="#1a1a1a"/></svg></div>
    <div class="w-[168px] text-right leading-[40px] -mt-[2px]"><div class="tracking-[-0.1px]">1:44 PM</div><div class="tracking-[-0.2px]">8/26/2023</div></div>
    <div class="ml-[15px] w-[48px] h-[40px] rounded-full bg-[#5b8229] text-white text-[25px] leading-[37px] text-center tracking-[-0.8px]">29</div>
  </div>
</footer>

<script>
// Letter boxes: given letters are shaded, the focused one is outlined.
document.querySelectorAll('[data-word]').forEach(el => {
  const given = +el.dataset.given, focus = +(el.dataset.focus ?? -1), dim = +(el.dataset.dim ?? -1);
  const letters = [...el.dataset.word];
  el.className = 'flex shrink-0 h-16 border-2 border-[#dcdcdc] rounded-[10px] font-bold text-center leading-[54px]';
  el.innerHTML = letters.map((ch, i) => {
    const last = i === letters.length - 1;
    const size = last ? 'w-[59px]' : 'w-[61px] border-r-2 border-[#dcdcdc]';
    const tone = i < given ? 'bg-[#f8fafc] text-[#8b97a4]' : i === dim ? 'text-[#757575]' : '';
    const edge = i === 0 ? 'rounded-l-[8px]' : '';
    const ring = i === focus ? 'relative before:absolute before:content-[""] before:-inset-x-[6px] before:-top-[7px] before:-bottom-[7px] before:bg-[#f0f9ff] before:border-[5px] before:border-[#1cb0f6]' : '';
    return `<span class='${size} ${tone} ${edge} ${ring}'><span class="relative">${ch}</span></span>`;
  }).join('');
});
</script>
</body>
</html>
